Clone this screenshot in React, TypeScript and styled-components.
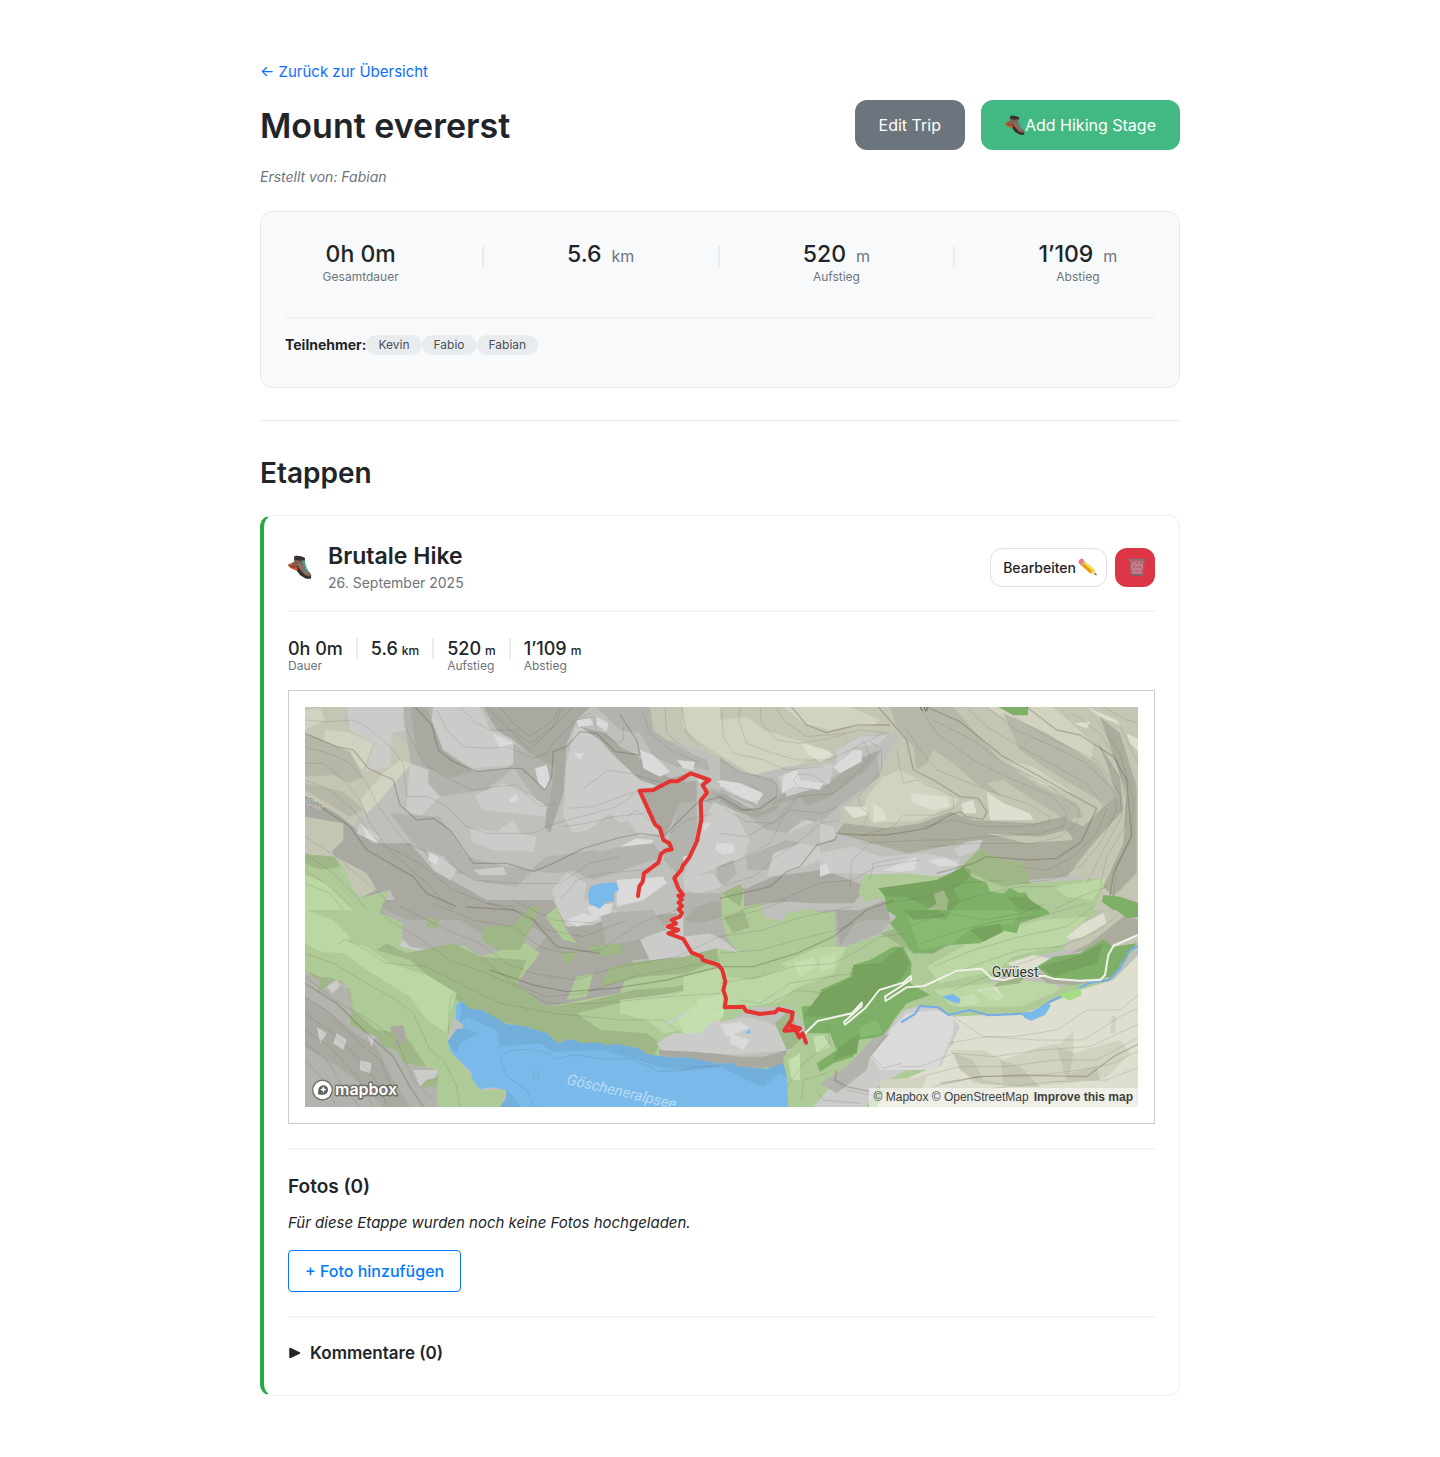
import React from "react";
import styled, { createGlobalStyle, css } from "styled-components";

const color = {
  text: "#212529",
  muted: "#6c757d",
  line: "#e9ecef",
  soft: "#f3f4f5",
  panel: "#f8f9fb",
  link: "#0d6efd",
  action: "#007bff",
  green: "#28a745",
  add: "#42b883",
  danger: "#dc3545",
};

const GlobalStyle = createGlobalStyle`
  *, *::before, *::after { box-sizing: border-box; }
  body {
    margin: 0;
    background: #fff;
    color: ${color.text};
    font-family: Inter, Roboto, "Liberation Sans", sans-serif;
    font-size: 15px;
    line-height: 24px;
  }
  h1, h2, h3, h4, p, dl, dt, dd, ul { margin: 0; padding: 0; }
  button { font-family: inherit; cursor: pointer; }
`;

const Page = styled.main`
  max-width: 920px;
  margin: 0 auto;
  padding: 60px 0;
`;

const BackLink = styled.a`
  display: block;
  width: fit-content;
  color: ${color.link};
  text-decoration: none;
`;

const TripHeader = styled.header`
  display: flex;
  align-items: center;
  justify-content: space-between;
  margin-top: 16px;
`;

const TripTitle = styled.h1`
  padding-top: 2px;
  font-size: 34px;
  line-height: 44px;
  font-weight: 600;
`;

const Actions = styled.div<{ $gap: number }>`
  display: flex;
  gap: ${(p) => p.$gap}px;
`;

const TripButton = styled.button<{ $bg: string }>`
  display: flex;
  align-items: center;
  height: 50px;
  padding: 0 24px;
  border: 0;
  border-radius: 12px;
  background: ${(p) => p.$bg};
  color: #fff;
  font-size: 16px;
`;

const Author = styled.p`
  margin-top: 15px;
  color: ${color.muted};
  font-size: 14px;
  font-style: italic;
`;

const Summary = styled.section`
  margin-top: 22px;
  padding: 24px 24px 32px;
  border: 1px solid ${color.line};
  border-radius: 12px;
  background: ${color.panel};
`;

const Totals = styled.dl`
  display: flex;
  justify-content: space-around;
  gap: 8px;
  padding: 4px 0 32px;
  border-bottom: 1px solid ${color.line};
`;

const Stat = styled.div<{ $large?: boolean }>`
  display: flex;
  flex-direction: column-reverse;
  justify-content: flex-end;
  ${(p) => p.$large && css`align-items: center;`}
`;

const StatLabel = styled.dt`
  color: ${color.muted};
  font-size: 12px;
  line-height: 16px;
`;

const StatValue = styled.dd<{ $large?: boolean }>`
  display: flex;
  align-items: baseline;
  gap: ${(p) => (p.$large ? 10 : 4)}px;
  font-size: ${(p) => (p.$large ? 23 : 18)}px;
  line-height: ${(p) => (p.$large ? 29 : 19)}px;
  font-weight: 500;
`;

const Unit = styled.span<{ $large?: boolean }>`
  font-size: ${(p) => (p.$large ? 16 : 12)}px;
  line-height: 12px;
  ${(p) => p.$large && css`color: ${color.muted}; font-weight: 400;`}
`;

const Divider = styled.span<{ $top?: number }>`
  width: 2px;
  height: 21px;
  margin-top: ${(p) => p.$top ?? 0}px;
  background: ${color.line};
`;

const People = styled.div`
  display: flex;
  align-items: center;
  padding-top: 17px;
`;

const PeopleLabel = styled.strong`
  font-size: 14px;
  line-height: 20px;
`;

const PeopleList = styled.ul`
  display: flex;
  list-style: none;
`;

const Person = styled.li`
  padding: 0 12px;
  border-radius: 10px;
  background: ${color.line};
  color: #495057;
  font-size: 12px;
  line-height: 20px;
`;

const Stages = styled.section`
  margin-top: 32px;
  padding-top: 34px;
  border-top: 1px solid ${color.line};
`;

const StagesTitle = styled.h2`
  font-size: 28px;
  line-height: 36px;
  font-weight: 600;
`;

const Stage = styled.article`
  margin-top: 24px;
  padding: 24px;
  border: 1px solid #eff0f2;
  border-left: 4px solid ${color.green};
  border-radius: 12px;
`;

const StageHeader = styled.header`
  display: flex;
  align-items: center;
  gap: 16px;
  padding-bottom: 16px;
  border-bottom: 2px solid ${color.soft};
`;

const StageHeading = styled.div`
  flex: 1;
`;

const StageTitle = styled.h3`
  font-size: 23px;
  line-height: 32px;
  font-weight: 600;
`;

const StageDate = styled.time`
  display: block;
  color: ${color.muted};
  font-size: 14px;
  line-height: 22px;
`;

const EditButton = styled.button`
  display: flex;
  align-items: center;
  gap: 2px;
  height: 39px;
  padding: 0 8px 0 12px;
  border: 1px solid #dee0e6;
  border-radius: 12px;
  background: #fff;
  color: ${color.text};
  font-size: 14px;
  font-weight: 500;
`;

const DeleteButton = styled.button`
  display: flex;
  align-items: center;
  justify-content: center;
  width: 40px;
  height: 39px;
  padding: 0 0 0 4px;
  border: 0;
  border-radius: 12px;
  background: ${color.danger};
`;

const StageStats = styled.dl`
  display: flex;
  gap: 13px;
  padding: 26px 0 16px;
`;

const StageStat = styled(Stat)`
  padding-top: 1px;
`;

const MapFrame = styled.div`
  padding: 16px;
  border: 1px solid #ccc;
`;

const MapBox = styled.div`
  position: relative;
  height: 400px;
  overflow: hidden;

  & > svg { display: block; width: 100%; height: 100%; }
`;

const MapLogo = styled.a`
  position: absolute;
  left: 7px;
  bottom: 4px;
  display: flex;
`;

const Attribution = styled.div`
  position: absolute;
  right: 0;
  bottom: 0;
  display: flex;
  gap: 5px;
  padding: 0 5px;
  background: rgba(255, 255, 255, 0.5);
  font-family: "Liberation Sans", Arial, sans-serif;
  font-size: 12px;
  line-height: 19px;

  a { color: #404040; text-decoration: none; }
`;

const Photos = styled.section`
  margin-top: 24px;
  padding: 25px 0 24px;
  border-top: 2px solid ${color.soft};
  border-bottom: 2px solid ${color.soft};
`;

const PhotosTitle = styled.h4`
  font-size: 19px;
  line-height: 24px;
  font-weight: 600;
`;

const Empty = styled.p`
  margin-top: 12px;
  font-style: italic;
`;

const PhotoButton = styled.button`
  height: 42px;
  margin-top: 15px;
  padding: 0 16px;
  border: 1px solid ${color.action};
  border-radius: 4px;
  background: #fff;
  color: ${color.action};
  font-size: 16px;
  font-weight: 500;
`;

const Comments = styled.details`
  padding: 23px 0 6px;
`;

const CommentsTitle = styled.summary`
  display: flex;
  align-items: center;
  gap: 9px;
  font-size: 17px;
  font-weight: 600;
  list-style: none;
  cursor: pointer;
`;

const Boot = ({ size }: { size: number }) => (
  <svg width={size} height={size} viewBox="0 0 24 24" aria-hidden="true">
    <path d="M6.500 1.200L17 3l-.3 5 2 6.200 3.800 4.300c1 1.500 1 3.200.3 4.500l-3.500.7-6-3L9 15.500 1.200 12 .4 9.800 5.800 7z" fill="#80604e" />
    <path d="M9 8l5 1.500 3 6 3.500 4-5 .5-4-6z" fill="#916e59" />
    <path d="M6.500 1.200C9 .4 13.500.8 17 3l-.6 2.800C13.500 6 9 5.500 6 4.600z" fill="#37302f" />
    <path d="M0 10l2.500 2.500L8 14.600l4 5.400 5.500 3.500 5.300.2.200-2.400c-2.500.3-5-.3-7-2.300l-3.500-4L9.500 11 5 11.600z" fill="#35302e" />
    <path d="M0 9.600l2.600-1.200c1 1.600 2.800 2.600 6.400 3.600l1 2.600-1.800.8C5 14.600 1 13 0 9.600z" fill="#d8562e" />
    <path d="M2.500 10.800l4.500 1.800" stroke="#4a302a" strokeWidth="1" />
    <path d="M14 5.500l2.500 1-1.800 1.700 2.600.8-1.600 2 2.500.7-1.400 2 2.600.8-1 2 2 .6" fill="none" stroke="#38a9ad" strokeWidth="1.100" />
  </svg>
);

const Pencil = () => (
  <svg width="20" height="20" viewBox="0 0 20 20" aria-hidden="true">
    <path d="M5.200 3.200L16 12l2.700 6.200-6.500-2L1.800 7z" fill="#f9c01f" />
    <path d="M6 4.500L16 12l-1.800 1.500L4 5.500z" fill="#ffdc4d" />
    <path d="M1.800 7l2-2.200 10.400 9.400-2 2z" fill="#e59b0c" />
    <path d="M12.200 16.200L16 12l2.700 6.200z" fill="#f2cfa2" />
    <path d="M16.700 17.600l1.200-1.300.8 1.900z" fill="#333" />
    <path d="M2.400 7.500l3.500-4 1.400 1.200-3.500 4z" fill="#a9b4be" />
    <path d="M.8 5.900C0 4.500 2.200 1.400 4 1.600c1 .2 1.300 1.300 1.900 1.900l-3.500 4C1.900 7 1.200 6.700.8 5.900z" fill="#ee7286" />
  </svg>
);

const Trash = () => (
  <svg width="20" height="20" viewBox="0 0 20 20" aria-hidden="true">
    <path d="M2.500 2.500l1.800 15.700h11.400l1.800-15.700z" fill="#b06270" />
    <path d="M4 4l10 14M7 4l8 12M10.500 4l5 7M3.500 8l7 10M16 4L6 18M13 4l-8.500 12M9.500 4L4 11M16 8.500L9.500 18M3.600 8h12.800M4 12h12M4.300 16h11.400" stroke="#d08c95" strokeWidth=".8" fill="none" />
    <path d="M2.500 2.500l1.800 15.700h11.400l1.800-15.700" fill="none" stroke="#8d6770" strokeWidth="1" />
    <path d="M1.500 1.800h17v1.700h-17z" fill="#85737a" />
    <path d="M4.200 17h11.600v1.600H4.200z" fill="#75666c" />
  </svg>
);

const MapboxLogo = () => (
  <svg width="88" height="26" viewBox="0 0 88 26" aria-label="Mapbox">
    <g stroke="#5c5c55" strokeOpacity=".75" strokeWidth="3" strokeLinejoin="round" paintOrder="stroke" fill="#fff">
      <circle cx="10.500" cy="13" r="9" />
      <text x="23" y="17.500" fontFamily="Inter, sans-serif" fontSize="16" fontWeight="600">mapbox</text>
    </g>
    <circle cx="10.500" cy="13" r="9" fill="#fff" />
    <path d="M6.200 17.500c-.5-3.500.1-6.300 1.600-7.800 2-2 5-2 6.900-.1s1.900 5-.1 6.900c-1.500 1.500-4.800 1.600-8.400 1z" fill="#66665f" />
    <path d="M11.300 9.300l1 2.200 2.200 1-2.200 1-1 2.200-1-2.200-2.200-1 2.200-1z" fill="#fff" />
  </svg>
);

const terrain = {
  mid: "#bfc0bb",
  light: "#cbcbca",
  bright: "#dadadb",
  shade: "#b3b3ad",
  dark: "#a9a8a1",
  sand: "#c5c5b4",
  sandLight: "#d2d2c1",
  sandBright: "#dfdfd0",
  sandDark: "#b7b7a7",
  sandDeep: "#acac9c",
  meadow: "#aeca97",
  meadowLight: "#bad7a4",
  meadowBright: "#c4dfae",
  meadowDark: "#9fb787",
  forest: "#7eb067",
  forestLight: "#87bb70",
  forestDark: "#77a35f",
  water: "#79baeb",
  waterDark: "#72afda",
};

type Patch = [keyof typeof terrain, string];

const northWest: Patch[] = [
  ["sand", "M15 21H140L130 70L220 130L280 95L340 150L330 190L230 320L180 350L90 460H15Z"],
  ["sandLight", "M75 90L140 95L220 130L190 210L120 160L70 130ZM180 300L250 220L300 180L335 190L240 300L200 340ZM15 30L60 25L75 60L15 90Z"],
  ["sandDark", "M15 100L150 155L190 230L150 250L100 225L15 230ZM15 250L130 275L190 330L150 350L15 270Z"],
  ["light", "M140 21H310L320 90L275 100L270 200L195 215L225 130L150 90Z"],
  ["shade", "M310 21H400L420 150L520 215L630 205L560 270L410 290L340 240L320 110Z"],
  ["dark", "M330 21H380L430 150L520 215L450 235L380 200L350 150Z"],
  ["light", "M400 21H540L570 90L640 120L640 195L520 205L430 150L395 60ZM330 190L385 210L385 250L420 290L360 350L320 330L325 250Z"],
  ["dark", "M550 21H870L830 60L800 130L790 280L750 400L735 380L750 240L700 170L640 120L590 90Z"],
  ["shade", "M640 130L720 180L765 200L745 330L700 290L640 200L600 240L560 260L640 190Z"],
  ["light", "M825 80L900 100L990 180L1030 235L1120 240L1010 275L1040 330L960 370L930 340L865 390L820 400L790 350L800 190Z"],
  ["light", "M525 285L610 250L700 290L740 320L735 350L650 340L545 330ZM510 385L590 395L640 360L660 400L710 410L700 455L580 450L515 425Z"],
  ["bright", "M705 205L740 195L750 240L735 270L715 250ZM580 100L600 110L640 130L600 145ZM625 300L650 280L655 300L635 310ZM830 60L870 55L880 75L835 80ZM820 160L850 160L840 180Z"],
  ["dark", "M840 80L920 100L960 140L1000 160L1110 235L1170 220L1150 250L1080 260L1020 240L940 165L900 120Z"],
  ["shade", "M890 21H1050L1065 90L1150 150L1220 180L1230 210L1130 200L1060 170L1020 100L960 90Z"],
  ["bright", "M1020 150L1060 165L1110 215L1080 230L1030 205ZM890 50L925 70L920 95L890 75ZM1130 180L1185 185L1180 210L1150 205Z"],
  ["sand", "M1050 21H1260V175L1210 150L1100 120L1060 90Z"],
  ["sandLight", "M1150 21H1260V165L1190 120L1150 80Z"],
  ["shade", "M270 340L420 350L500 470L620 500L700 510L650 560L560 550L420 500L330 420Z"],
  ["dark", "M15 290L110 340L220 430L330 430L400 510L560 600L600 630H300L270 570L180 595L150 530L100 460L60 380L15 350Z"],
  ["sand", "M15 350L130 370L130 420L90 460L200 520L230 570L180 595L105 480L15 460Z"],
  ["light", "M380 450L430 470L470 510L450 540L400 510ZM180 370L240 410L230 430L170 400ZM755 570L800 520L860 550L850 600L770 610ZM520 510L610 500L620 525L540 525Z"],
  ["bright", "M185 375L215 400L230 425L200 415ZM390 455L415 470L410 495L385 480ZM950 445L1010 415L1060 420L1040 455L970 465Z"],
  ["dark", "M1030 280L1100 250L1220 240L1215 300L1140 310L1110 380L1090 410L1060 360Z"],
  ["shade", "M740 470L880 450L950 480L860 510L760 520L690 510ZM830 470L960 440L1060 430L1090 470L1000 500L880 540L830 520Z"],
  ["shade", "M1140 310L1210 300L1190 430L1130 520L1090 480L1110 400Z"],
  ["light", "M1210 300L1260 310V540L1170 540L1150 500L1200 420ZM1010 330L1060 350L1080 400L1020 410L980 360Z"],
  ["bright", "M1190 370L1230 370L1205 400ZM1150 470L1200 455L1190 490L1150 500ZM950 540L1090 530L1100 550L1030 600L950 620Z"],
  ["meadow", "M15 463L105 470L130 500L160 570L180 595L270 570L240 630H15Z"],
  ["meadowLight", "M15 525L80 550L130 600L160 630H15Z"],
  ["meadowDark", "M15 463L105 470L120 500L60 510L15 490Z"],
];

const southWest: Patch[] = [
  ["dark", "M230 0H870L940 60L1130 40V170L1000 180L960 280L740 320L560 260L330 130L240 40Z"],
  ["light", "M330 60L400 90L460 130L400 165L300 140ZM590 140L650 150L690 130L640 170L600 170ZM760 0H860L960 40L880 75L800 80ZM1140 50L1260 20V150L1140 190L1050 180L1020 120Z"],
  ["shade", "M240 21L320 60L480 60L560 110L640 130L700 80L740 110L660 200L520 170L330 140L280 90ZM900 40L1060 30L1100 90L1010 120L920 140Z"],
  ["bright", "M860 21L940 10L930 40L880 55ZM800 60L850 40L900 55L830 80Z"],
  ["meadow", "M15 0H250L240 40L310 70L300 140L400 165L490 135L540 170L680 130L720 160L650 250L735 320L800 310L960 280L1000 185L1140 190L1260 150V480L1060 470L770 430L620 375L500 330L480 305L440 420L540 570L620 570L600 621H410L415 510L310 490L240 400L150 380L140 250L15 215Z"],
  ["meadowDark", "M460 130L540 170L680 180L650 250L735 320L840 310L1000 270L1130 260L1260 220V250L1000 300L830 340L760 370L690 350L640 375L500 330L470 300L400 240L330 180L230 150L260 130L320 160Z"],
  ["meadowDark", "M640 375L690 350L830 340L900 390L1040 400L1080 430L1060 470L770 430Z"],
  ["meadowLight", "M15 30L100 60L150 110L130 160L60 155L15 130ZM120 120L200 140L270 190L390 230L470 280L450 340L440 400L380 360L330 290L200 210L130 160ZM960 300L1130 280L1260 240V330L1160 390L1090 400L1040 360L960 340Z"],
  ["meadowBright", "M1130 350L1200 310L1260 330V360L1190 410L1150 400Z"],
  ["meadowDark", "M15 210L60 250L40 285L90 280L120 240L150 270L160 330L230 390L310 400L340 440L380 500L310 490L240 440L230 410L150 380L140 260L100 235L60 230ZM380 50L420 60L410 85L380 80ZM550 80L640 75L690 20L720 20L690 90L660 150L590 150L545 120ZM860 140L960 130L970 160L900 170ZM780 160L840 150L800 200Z"],
  ["meadow", "M735 50L770 20L800 90L830 130L790 120ZM830 230L880 220L860 290L800 300Z"],
  ["shade", "M15 220L60 240L50 280L100 240L145 270L160 330L140 370L230 410L250 440L290 450L310 490L415 510L410 621H15Z"],
  ["dark", "M15 290L80 330L180 410L230 440L280 540L330 621H250L180 550L100 490L15 440ZM270 380L310 375L320 420L290 440Z"],
  ["light", "M80 260L110 240L120 260L95 280ZM110 400L140 420L130 450L100 430ZM200 400L225 410L215 440ZM340 510L415 510L400 550L360 560ZM50 380L80 400L60 430ZM180 480L215 490L210 520L180 510Z"],
  ["meadowDark", "M230 410L290 400L290 430L250 440ZM380 540L415 530L410 560L360 560Z"],
  ["light", "M1070 430L1120 400L1200 400L1230 370L1260 360V470L1200 460L1100 470Z"],
  ["dark", "M1075 450L1180 455L1260 462V495L1160 475L1080 468Z"],
  ["water", "M484 304L510 327L545 330L620 373L665 377L740 400L772 430L790 425L812 417L845 430L900 428L920 436L945 432L1015 445L1040 463L1110 472L1170 474L1262 492V621H600L618 595V570L580 562L540 567L518 540L512 515L452 455L443 425L470 388L490 385L488 372L468 358V315Z"],
  ["waterDark", "M484 304L510 327L545 330L620 373L665 377L740 400L772 430L790 425L812 417L845 430L900 428L920 436L945 432L1015 445L1040 463L1110 472L1170 474L1260 492V500L1170 512L1100 505L1010 480L900 450L760 455L720 430L600 440L590 390L500 350L480 370ZM443 425L470 388L490 385L540 400L480 430L470 460ZM600 621L618 595V570L640 590L660 621Z"],
];

const northEast: Patch[] = [
  ["sand", "M0 21H1260V630H1120L1100 540L800 440L780 470H560L350 400L370 320L420 290L470 230L490 150L540 100L470 100L380 120L320 190L200 210L100 230L0 170Z"],
  ["sandLight", "M0 60L80 50L130 90L260 130L330 160L200 205L100 225L0 165ZM190 21H390L480 60L460 75L390 80L330 90L250 70ZM490 230L540 210L640 260L720 300L690 325L600 360L460 370L430 330L440 290ZM800 21H1000L1120 130L1110 200L1000 130L880 70ZM860 180L940 200L1060 280L960 250Z"],
  ["sandBright", "M245 130L320 150L340 165L300 185L260 160ZM570 280L680 290L690 320L640 330L580 310ZM800 275L850 310L930 340L940 360L810 360ZM725 310L760 300L770 340L730 340ZM370 320L440 320L440 345L400 355ZM1060 70L1110 65L1100 85ZM1100 21L1190 60L1200 75L1140 50ZM1220 100L1260 120V160L1230 130ZM460 310L490 330L500 360L460 365Z"],
  ["sandDark", "M510 21H700L760 90L840 180L960 260L1070 310L1090 350L1040 360L940 300L850 240L800 250L850 290L780 260L700 190L640 150L620 190L590 210L580 140L530 80ZM850 40L980 100L1130 190L1190 280L1180 330L1120 290L1000 220L900 150Z"],
  ["sandDeep", "M1130 120L1200 230L1210 330L1120 430L1040 530L930 540L780 450L560 460L430 450L350 400L370 370L500 385L600 370L690 335L760 360L940 370L1030 350L1090 380L1150 320L1190 290L1160 190Z"],
  ["sandDeep", "M1140 50L1200 100L1250 260V520L1180 590L1150 560L1210 430L1220 280Z"],
  ["sand", "M800 400L960 410L1040 390L1060 420L920 430ZM1140 420L1170 420L1165 460L1145 450Z"],
  ["mid", "M0 250L200 200L320 190L380 120L540 100L470 230L370 320L350 400L560 460L780 420L780 460L740 500L600 560L420 630H0Z"],
  ["shade", "M0 170L60 215L160 235L200 300L340 230L470 150L480 230L370 310L300 370L200 350L120 390L0 350Z"],
  ["dark", "M0 280L60 320L130 330L190 280L300 270L430 170L485 150L440 210L330 290L210 340L160 420L80 470L150 370L60 350L0 320ZM40 570L200 540L340 520L440 560L400 610L280 610L150 600L0 625V600Z"],
  ["light", "M0 360L90 380L140 400L120 440L0 490ZM190 400L260 360L340 380L350 410L280 440L220 430ZM60 500L240 470L400 440L480 470L620 460L720 480L700 520L600 540L440 520L260 520L100 550ZM175 230L240 205L340 190L330 250L200 290Z"],
  ["bright", "M0 240L60 250L130 280L110 310L60 290L0 265ZM190 225L230 210L240 240L310 250L300 270L220 260L185 280ZM340 200L400 150L425 150L425 185L360 220ZM490 510L590 470L585 510L540 515ZM0 430L45 435L40 460L0 470ZM280 505L320 490L330 520L300 530ZM620 480L680 475L720 495L660 500Z"],
  ["light", "M700 450L740 425L790 420L770 450L720 470ZM350 150L420 110L500 105L480 130L400 145L350 190Z"],
  ["meadow", "M430 525L560 520L650 530L700 520L780 445L830 475L910 490L930 550L1160 535L1120 630H520L480 590L440 610L415 580ZM10 580L55 555L72 570L60 630L20 605Z"],
  ["meadowDark", "M780 445L830 475L910 490L930 550L850 560L800 540L720 505Z"],
  ["meadowLight", "M1000 560L1100 545L1160 535L1120 600L1040 590Z"],
  ["forest", "M475 565L540 570L620 545L650 540L670 530L710 535L730 500L750 510L755 530L800 550L810 575L850 580L870 565L900 580L915 575L930 600L980 630H500L495 590ZM1150 585L1200 590L1260 610V630H1180L1145 605Z"],
  ["forestDark", "M475 565L650 540L730 500L750 530L700 570L720 600L700 630H640L560 590L500 590ZM860 590L920 590L970 630H900Z"],
  ["meadowDark", "M640 580L670 570L685 600L680 630H620L650 610Z"],
  ["forest", "M835 21H924V46H880Z"],
];

const southEast: Patch[] = [
  ["shade", "M0 0H500L510 70L480 100L350 150L345 60L200 30L120 20L0 60Z"],
  ["dark", "M350 30L500 0L510 60L410 60L360 140ZM120 10L200 0L180 30Z"],
  ["meadow", "M0 50L30 20L200 40L345 35L350 150L490 100L600 0H1150L1160 20L1040 100L1030 150L900 180L780 270L960 300L1020 260L1250 140L900 621H0Z"],
  ["meadowLight", "M0 190L120 160L330 140L380 140L340 220L240 260L130 300L0 310ZM620 200L780 110L960 60L1100 50L1040 130L880 170L830 210L660 250ZM640 270L800 250L900 240L1000 250L1020 270L900 320L700 320Z"],
  ["meadowBright", "M260 190L310 170L350 160L340 200L280 225ZM0 320L15 310L10 350L0 360ZM700 300L760 280L780 310L720 320Z"],
  ["meadowDark", "M60 60L120 80L180 60L230 90L130 130L60 160L30 120ZM480 100L620 60L700 130L640 160L580 160ZM850 230L920 220L900 250L820 260Z"],
  ["sand", "M1060 90L1110 60L1170 20L1260 60V140L1160 130L1030 150Z"],
  ["sandBright", "M1040 110L1090 70L1150 40L1160 70L1090 110L1050 120ZM860 190L940 165L1010 180L920 220ZM770 270L830 260L850 295L830 300Z"],
  ["sandDeep", "M1110 130L1210 50L1260 60V100L1160 140L1050 160ZM940 215L1000 230L1080 240L1120 245L1060 255L980 250Z"],
  ["forest", "M500 0H950L990 40L900 70L890 100L840 90L780 130L680 135L640 160L580 160L550 120L510 70L530 50L500 30ZM950 200L1000 170L1080 160L1150 118L1180 140L1250 130L1210 180L1180 230L1080 240L1000 240ZM1150 0H1260V50L1220 55Z"],
  ["forestLight", "M560 40L680 60L700 20L830 10L900 40L880 70L760 80L700 130L600 150L580 100ZM690 10L760 0L740 60Z"],
  ["forestDark", "M500 0H620L680 50L580 60L550 30ZM750 90L840 70L850 95L790 125ZM960 200L1080 165L1150 130L1130 190L1000 230Z"],
  ["mid", "M0 380L100 320L210 320L260 390L210 460L190 500L60 500L0 485Z"],
  ["light", "M0 365L80 350L150 370L190 400L210 450L100 460L0 465Z"],
  ["bright", "M30 400L90 420L70 450L30 430ZM0 375L60 365L90 385L20 410Z"],
  ["dark", "M0 462L60 470L130 470L200 450L190 500L60 505L0 492Z"],
  ["meadowDark", "M165 370L210 330L230 380L250 430L200 450Z"],
  ["forest", "M245 320L330 310L300 270L390 230L400 195L450 180L520 140L550 140L575 190L570 250L630 285L560 310L520 360L490 410L410 420L400 470L340 490L300 515L290 490L350 450L330 400L260 410L250 360Z"],
  ["forestDark", "M300 280L400 230L400 195L480 190L540 140L570 190L540 240L480 280L420 330L330 350L250 350ZM360 440L420 400L410 460L340 480Z"],
  ["forestLight", "M420 380L470 360L490 400L420 410Z"],
  ["meadow", "M190 470L220 440L260 400L330 400L340 440L270 500L250 530L330 520L290 570L280 621H205L190 500Z"],
  ["meadowBright", "M280 410L310 405L330 440L290 460ZM205 480L240 460L240 540L215 540Z"],
  ["sandBright", "M690 350L800 345L900 345L990 310L1080 270L1180 240L1260 160V621H470L500 560L620 510L700 430Z"],
  ["light", "M550 330L590 320L650 325L690 345L720 380L660 500L560 510L470 560L440 621H280L340 550L460 440L520 370Z"],
  ["bright", "M560 340L650 330L700 350L700 400L650 510L560 510L480 510L450 460L520 380Z"],
  ["shade", "M460 415L510 400L450 470L440 510L350 580L300 550L380 500Z"],
  ["sandLight", "M690 450L790 450L850 480L960 440L1020 430L1060 395L1060 460L1200 420L1230 460L1160 530L1050 550L900 560L760 550L720 500ZM1175 350L1190 345L1185 400L1170 400ZM480 540L620 530L600 580L480 570Z"],
  ["sand", "M700 460L760 480L790 540L850 550L840 480L900 500L960 560L900 560L780 550L720 510ZM1010 440L1060 460L1050 520L1130 500L1140 540L1040 540Z"],
  ["meadowBright", "M780 270L820 265L850 295L810 300Z"],
];

const centre: Patch[] = [
  ["mid", "M290 60L400 90L560 220L660 180V330L480 420L420 375L370 410L260 430L230 360L290 250Z"],
  ["shade", "M310 80L370 95L450 150L540 130L600 115L640 150L560 220L500 210L440 165L360 135L320 130Z"],
  ["dark", "M330 95L380 105L440 140L480 155L540 130L530 150L470 175L400 150Z"],
  ["bright", "M350 62L420 70L490 105L470 132L420 110L380 90ZM290 55L310 60L300 70Z"],
  ["light", "M310 190L340 125L400 150L450 240L430 290L340 330L290 345L250 350L265 310L295 250Z"],
  ["bright", "M310 190L335 190L310 215ZM350 250L400 250L405 275L370 285L345 270Z"],
  ["shade", "M350 320L400 300L410 340L380 370L350 375ZM440 290L560 240L600 250L520 330L440 330Z"],
  ["light", "M520 280L600 250L660 260V300L560 340L500 350Z"],
  ["shade", "M250 400L370 400L390 470L385 540L420 580L350 565L275 570L250 530Z"],
  ["light", "M250 530L330 520L370 540L420 580L345 565L280 575ZM250 350L340 340L370 380L300 400L255 390Z"],
  ["dark", "M290 440L360 420L370 470L300 490L250 480ZM430 390L520 350L660 330V380L540 440L487 435L432 440Z"],
  ["mid", "M487 430L560 425L640 440L560 460L550 485L490 470Z"],
  ["meadow", "M365 400L418 373L432 390V440L485 430L487 470L550 485L560 460L630 445L660 460V600L420 700L300 640L250 600L350 565L420 580L385 540L365 480Z"],
  ["meadowDark", "M365 400L418 373L432 390L420 440L380 410ZM370 470L430 450L450 500L400 520ZM0 680L30 620L110 605L250 590L350 565L355 600L260 640L130 650Z"],
  ["meadowLight", "M250 650L360 625L500 630L660 560V640L580 690L540 725L440 740L380 740L300 720L250 690Z"],
  ["meadow", "M380 610L520 600L560 620L460 660L380 650Z"],
  ["meadowBright", "M580 610L640 590L650 620L600 650ZM290 720L375 700L375 745L300 745Z"],
];

const contours = {
  nw: [
    "M15 60L80 65L160 60L200 80L270 140L310 190L320 290L385 290L440 320L500 380L560 400L700 400L740 380L800 360L880 340L950 320L1020 270",
    "M15 140L100 165L150 190L200 250L230 310L280 380L320 430L420 470L520 540L640 550L780 550L870 490L960 470",
    "M15 190L70 190L130 240L180 300L210 370L260 440L360 490L460 570L560 610L640 620",
    "M15 240L90 270L160 330L210 400L300 480L370 540L420 590L460 630",
    "M310 40L315 80L350 150L370 190L450 240L520 270L590 260L650 255L720 320L770 310",
    "M410 30L440 90L490 140L560 145L620 140L700 175L740 160L760 130L830 60L870 40",
    "M480 21L530 70L570 90L640 90L690 130L760 80L790 21M600 21L640 70L690 110L760 60L780 21M560 21L690 150L820 21",
    "M800 325L880 320L960 290L1020 270M790 380L860 370L940 350L1030 340M850 265L900 230L920 210L990 220L1090 250",
    "M1095 21L1100 100L1170 160M1145 21L1160 100L1200 140M970 80V120L950 130L890 90L880 50L830 60M1030 40L1050 100L1110 150L1200 190",
    "M15 460L100 520L170 590L200 630M15 510L90 560L150 620M15 550L90 580L130 630M15 410L110 470L190 540L270 610",
    "M780 600L830 540L910 520L1030 510L1090 490M1060 370L1010 330L980 350M1110 400L1160 360L1240 340",
  ],
  nwBold: [
    "M15 100L110 140L160 150L205 205L280 240L300 315L350 360L400 355L450 390L520 490L620 490L700 515L760 490L850 445L950 415L1020 400L1090 410L1130 370L1190 310L1260 290",
    "M345 21L395 75L415 150L460 185L530 215L620 205L665 205L735 270L755 230L760 155L800 140L840 95L890 100L945 155L1020 165L1010 120L960 45",
    "M15 290L60 320L150 380L200 450L340 530L380 580L470 620",
  ],
  sw: [
    "M15 160L100 190L200 250L290 300L340 340L390 450L430 480L470 560L480 621",
    "M115 130L140 118L200 150L260 190L380 200L480 250L600 310L760 340L860 350L960 360L1090 360L1140 400",
    "M250 50L350 110L450 180L560 220L650 260L740 310L900 310L1100 290L1260 280",
    "M300 20L440 90L540 130L620 190L700 220L820 240L960 200L1130 170L1260 110",
    "M400 10L520 60L640 80L720 140L790 160L900 150L1020 70L1130 30M560 10L680 40L740 90L850 110L980 60M640 0L760 60L900 70",
    "M540 170L640 250L740 290L850 280L1000 230L1260 180M445 400L450 300L460 280L490 300",
    "M15 230L120 310L210 360L290 420L340 540L400 600M15 290L90 340L170 420L240 480L290 590M15 340L100 400L180 480L240 560L260 621M15 390L90 440L170 530L220 621M15 430L80 480L130 560L180 621M15 480L70 540L110 621",
    "M600 475L625 452L690 447L745 460L765 477L825 465L920 478L990 475L1020 490L1055 500L1070 515L1140 512L1190 500L1260 498M600 475L620 530L680 570L697 605L690 621M700 525C700 510 716 510 716 525S702 543 700 525",
  ],
  swBold: ["M500 21L640 30L700 60L770 140L900 160M570 210L700 255L800 275L940 265L1100 240L1260 200M15 250L110 310L190 390L280 470L330 560L370 621"],
  ne: [
    "M60 21L55 60L80 130L160 160L230 180L330 180L410 140L490 100M120 21L125 70L170 120L240 130L330 115L420 90L510 100",
    "M5 30L10 110L40 160L130 180L200 210L310 200M170 21L190 60L260 110L380 100",
    "M0 300L60 330L120 330L170 290L170 250L120 230L60 215L0 180M10 325L80 365L160 370L210 330L310 340L350 320",
    "M0 270L90 310L120 300L130 280L90 250M0 400L80 410L170 360L230 290L340 280L420 210L450 170L430 120",
    "M415 290L420 320L445 340L430 380M415 290L485 210V150L450 125M530 150L550 250L590 240L700 290L700 325L640 345L550 345L520 380L430 405",
    "M560 90L600 150L650 210L800 270L920 310L990 350L990 365L900 380L780 380L700 360L610 380M600 21L650 100L760 180L880 240L1000 290L1040 340L1030 380L960 400L800 410L700 420L610 420L430 430",
    "M640 60L760 120L850 190L980 250L1080 330L1070 370L1020 410L940 430L760 430L620 440M740 21L800 80L900 140L1010 200L1100 250L1160 330L1130 400L1060 470L980 510L900 500",
    "M800 21L890 90L1000 140L1100 190L1180 270L1190 330L1140 430L1080 500L990 540L900 550M880 50L1000 120L1130 180L1200 280L1205 350L1150 450L1100 550",
    "M1060 40L1140 100L1190 180L1220 300L1215 380L1160 470L1140 560M1130 60L1200 160L1240 300L1235 400L1190 500L1180 590M1200 80L1260 200M1150 21L1220 60L1260 70",
    "M0 500L60 480L150 430L190 350L230 300M0 560L100 530L170 470L230 430L300 370L360 360M60 630L180 600L300 550L400 540L470 500L600 480M390 560L395 480L460 420M450 540L460 490L560 470",
    "M700 610L800 580L900 560L1020 560M500 610L620 590L720 550L850 540M1000 630L1080 590L1160 560",
    "M220 240L235 222L280 225L315 250L295 270L235 262Z",
  ],
  neBold: [
    "M475 21L560 120L580 210L640 240L720 290L775 295L800 335L790 358L740 350L720 335L690 345L620 385L500 405L420 405L350 400M0 595L150 560L200 515L240 500L290 435L345 420L350 405",
    "M620 21L720 65L850 170L960 230L1030 270L1130 325L1085 425L1010 475L930 480L800 470L760 490L650 520M920 21L1010 90L1080 105L1180 170L1220 240L1235 410L1180 520L1170 590",
    "M215 21L260 75L320 98L410 75L510 75M0 290L70 330L120 325L170 290",
  ],
  se: [
    "M0 110L130 90L250 50L400 20M0 160L120 150L230 120L350 90L430 60M0 250L120 230L220 200L340 190L400 160L480 110L560 100",
    "M60 300L120 310L210 250L330 230L400 220M150 310L230 270L320 280M0 60L120 30L200 0",
    "M560 80L680 40L800 60L900 40L980 10M600 130L720 90L850 60L960 50L1100 10M640 200L760 150L900 110L1040 80L1120 20",
    "M650 240L780 190L900 150L1020 140L1120 100L1190 50M700 270L850 210L960 170",
    "M700 350L730 370L790 410L880 410L1010 390L1100 330L1200 330L1260 280M680 430L800 410L950 420L1090 420L1200 350L1260 320",
    "M540 500L600 500L700 460L820 470L960 450L1110 440L1260 370M600 530L720 500L860 500L1000 480L1130 480L1260 410M640 560L780 530L920 530L1080 510L1180 490L1260 450M720 580L860 560L1000 545L1160 540L1260 500",
    "M455 465L490 505L545 490M455 465L500 400L520 360M320 520L250 540L245 600M340 540L380 570L470 590L560 600M200 621V560L250 490L330 430L320 370",
    "M0 520L40 520L60 540L145 555L148 621M290 570L310 600L420 610",
  ],
  seBold: ["M0 200L100 200L230 160L340 110L440 30L520 0M350 510L345 540L380 560L450 575M660 550L780 530L900 525L1100 530L1180 470L1260 430"],
};

const quadrants: { at: string; patches: Patch[] }[] = [
  { at: "translate(-15 579)", patches: southWest },
  { at: "translate(1245 579)", patches: southEast },
  { at: "translate(-15 -21)", patches: northWest },
  { at: "translate(1245 -21)", patches: northEast },
  { at: "translate(885 159)", patches: centre },
];

const lines: { at: string; thin: string[]; bold: string[] }[] = [
  { at: "translate(-15 -21)", thin: contours.nw, bold: contours.nwBold },
  { at: "translate(-15 579)", thin: contours.sw, bold: contours.swBold },
  { at: "translate(1245 -21)", thin: contours.ne, bold: contours.neBold },
  { at: "translate(1245 579)", thin: contours.se, bold: contours.seBold },
];

const TerrainMap = () => (
  <svg viewBox="0 0 2499 1200" preserveAspectRatio="xMidYMid slice" role="img" aria-label="Route">
    <rect width="2499" height="1200" fill={terrain.mid} />
    {quadrants.map((q) => (
      <g key={q.at} transform={q.at}>
        {q.patches.map(([tone, d]) => (
          <path key={d} d={d} fill={terrain[tone]} />
        ))}
      </g>
    ))}
    {lines.map((q) => (
      <g key={q.at} transform={q.at} fill="none" stroke="#55543f" strokeLinejoin="round">
        <path d={q.thin.join("")} strokeWidth="3" strokeOpacity=".17" />
        <path d={q.bold.join("")} strokeWidth="4" strokeOpacity=".3" />
      </g>
    ))}
    <path transform="translate(-15 -21)" d="M864 580L870 562L890 552L950 547L957 570L942 577V605L917 607L900 626L868 612Z" fill={terrain.water} />
    <g transform="translate(1245 579)">
      <path d="M0 490L15 492L35 487L50 500L140 507L190 490L200 530L204 621H0Z" fill={terrain.water} />
      <path d="M0 490L15 492L35 487L50 500L140 507L190 490L200 530L180 520L130 560L60 530L0 500Z" fill={terrain.waterDark} />
      <path d="M543 367L585 342L600 318L655 322L685 345L750 330L805 346L940 340L990 305L1110 248L1165 240L1200 205L1230 150L1254 138" fill="none" stroke="#74abe9" strokeWidth="6" />
      <path d="M665 290L700 281L722 298L718 311L695 305ZM903 340L930 336L975 315L985 306L992 318L975 345L935 362L915 355ZM75 402L88 386L92 398Z" fill={terrain.water} />
      <path d="M1015 285L1080 262L1085 285L1050 302Z" fill="#a5dc84" />
      <path d="M250 405L293 363L395 340L425 308L425 318L372 366L375 374L435 325L478 270L550 248L572 228L574 238L495 290L497 303L560 262L612 258L712 212L785 206L815 235L850 240L900 228H975L1000 236L1080 242L1140 240L1155 225L1165 165L1180 138L1254 105" fill="none" stroke="#f1f1ea" strokeWidth="6" strokeLinejoin="round" />
      <text x="815" y="230" fontFamily="Roboto, sans-serif" fontSize="42" fill="#33332f" stroke="#eceee2" strokeWidth="5" paintOrder="stroke">Gwüest</text>
    </g>
    <g transform="translate(-15 579)">
      <path d="M1098 375L1152 340" stroke="#b9d3d8" strokeWidth="6" />
      <text transform="translate(798 552) rotate(13)" fontFamily="Roboto, sans-serif" fontSize="45" fontStyle="italic" fill="#b9dcf4">Göscheneralpsee</text>
    </g>
    <text transform="translate(4 288) rotate(24)" fontFamily="Roboto, sans-serif" fontSize="28" fill="#77766a" stroke="#d8d8cd" strokeWidth="4" paintOrder="stroke">0 m</text>
    <path d="M1846 0l6 12M1858 0l4 14M1866 0v12" stroke="#66655a" strokeWidth="3" />
    <path
      transform="translate(885 159)"
      d="M114 408L118 380L128 365L132 340L175 308L183 282L195 272L215 268L208 250L190 240L180 205L165 193L119 92L160 90L210 64L232 64L255 50L273 40L328 60L308 75L321 98L302 122L304 178L291 243L268 292L248 318L245 328L223 354L235 385L249 405L235 407L246 418L236 428L246 438L236 448L246 458L240 470L215 480L228 490L203 500L235 510L205 520L250 537L275 578L305 590L308 600L355 615L367 630L376 665L370 690L378 715L374 742L430 740L438 753L480 762L525 757L535 747L578 757L575 778L553 812L585 810L570 796L600 805L590 815L598 832L608 820L618 848"
      fill="none"
      stroke="#e5342f"
      strokeWidth="12"
      strokeLinecap="round"
      strokeLinejoin="round"
    />
  </svg>
);

type Metric = { label?: string; value: string; unit?: string };

const Stats = ({ items, large }: { items: Metric[]; large?: boolean }) => {
  const List = large ? Totals : StageStats;
  const Item = large ? Stat : StageStat;
  return (
    <List>
      {items.map((item, i) => (
        <React.Fragment key={item.value}>
          {i > 0 && <Divider $top={large ? 6 : 0} />}
          <Item $large={large}>
            {item.label && <StatLabel>{item.label}</StatLabel>}
            <StatValue $large={large}>
              {item.value}
              {item.unit && <Unit $large={large}>{item.unit}</Unit>}
            </StatValue>
          </Item>
        </React.Fragment>
      ))}
    </List>
  );
};

const distances: Metric[] = [
  { value: "5.6", unit: "km" },
  { label: "Aufstieg", value: "520", unit: "m" },
  { label: "Abstieg", value: "1’109", unit: "m" },
];

export default function App() {
  return (
    <>
      <GlobalStyle />
      <Page>
        <BackLink href="#">← Zurück zur Übersicht</BackLink>
        <TripHeader>
          <TripTitle>Mount evererst</TripTitle>
          <Actions $gap={16}>
            <TripButton $bg={color.muted}>Edit Trip</TripButton>
            <TripButton $bg={color.add}>
              <Boot size={20} />
              Add Hiking Stage
            </TripButton>
          </Actions>
        </TripHeader>
        <Author>Erstellt von: Fabian</Author>

        <Summary>
          <Stats large items={[{ label: "Gesamtdauer", value: "0h 0m" }, ...distances]} />
          <People>
            <PeopleLabel>Teilnehmer:</PeopleLabel>
            <PeopleList>
              {["Kevin", "Fabio", "Fabian"].map((name) => (
                <Person key={name}>{name}</Person>
              ))}
            </PeopleList>
          </People>
        </Summary>

        <Stages>
          <StagesTitle>Etappen</StagesTitle>
          <Stage>
            <StageHeader>
              <Boot size={24} />
              <StageHeading>
                <StageTitle>Brutale Hike</StageTitle>
                <StageDate dateTime="2025-09-26">26. September 2025</StageDate>
              </StageHeading>
              <Actions $gap={8}>
                <EditButton>
                  Bearbeiten <Pencil />
                </EditButton>
                <DeleteButton aria-label="Etappe löschen">
                  <Trash />
                </DeleteButton>
              </Actions>
            </StageHeader>
            <Stats items={[{ label: "Dauer", value: "0h 0m" }, ...distances]} />
            <MapFrame>
              <MapBox>
                <TerrainMap />
                <MapLogo href="#">
                  <MapboxLogo />
                </MapLogo>
                <Attribution>
                  <span>
                    <a href="#">© Mapbox</a> <a href="#">© OpenStreetMap</a>
                  </span>
                  <a href="#">
                    <b>Improve this map</b>
                  </a>
                </Attribution>
              </MapBox>
            </MapFrame>
            <Photos>
              <PhotosTitle>Fotos (0)</PhotosTitle>
              <Empty>Für diese Etappe wurden noch keine Fotos hochgeladen.</Empty>
              <PhotoButton>+ Foto hinzufügen</PhotoButton>
            </Photos>
            <Comments>
              <CommentsTitle>
                <svg width="13" height="12" viewBox="0 0 13 12" aria-hidden="true">
                  <path d="M2 1.500v9l9.500-4.500z" fill={color.text} stroke={color.text} strokeWidth="1.500" strokeLinejoin="round" />
                </svg>
                Kommentare (0)
              </CommentsTitle>
            </Comments>
          </Stage>
        </Stages>
      </Page>
    </>
  );
}
